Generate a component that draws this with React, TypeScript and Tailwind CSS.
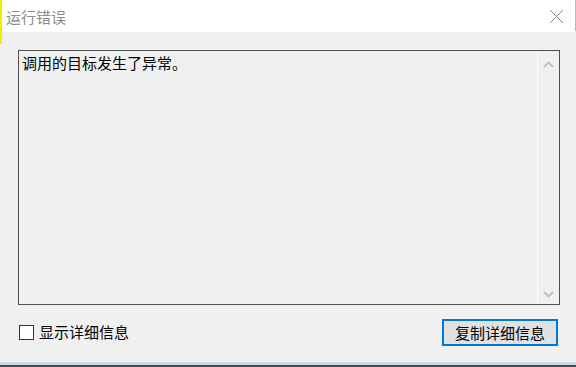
const font = { fontFamily: '"Microsoft YaHei", "Noto Sans CJK SC", "Noto Sans", sans-serif' }

function Chevron({ up }: { up?: boolean }) {
  return (
    <svg width="11" height="7" viewBox="0 0 11 7" className="text-[#bdbdbd]">
      <path
        d={up ? 'M1 6 L5.5 1.5 L10 6' : 'M1 1 L5.5 5.5 L10 1'}
        fill="none"
        stroke="currentColor"
        strokeWidth="1.8"
      />
    </svg>
  )
}

export default function App() {
  return (
    <div
      className="relative flex h-[367px] w-[576px] flex-col overflow-hidden bg-[#f0f0f0]"
      style={font}
    >
      {/* title bar */}
      <div className="flex h-[32px] items-center justify-between bg-white pl-[6px] pr-[12px]">
        <span className="text-[15px] leading-none text-[#8c8c8c]">运行错误</span>
        <svg width="15" height="15" viewBox="0 0 15 15" className="text-[#8a8a8a]">
          <path d="M1 1 L14 14 M14 1 L1 14" stroke="currentColor" strokeWidth="1" fill="none" />
        </svg>
      </div>

      <div className="flex flex-1 flex-col pl-[18px] pr-[16px] pt-[18px]">
        {/* message box */}
        <div className="flex h-[255px] border border-[#4f4f4f] bg-[#f0f0f0]">
          <div className="flex-1 pl-[3px] pt-[3px] text-[15px] leading-[18px] text-black">
            调用的目标发生了异常。
          </div>
          <div className="flex w-[22px] flex-col items-center justify-between border-l border-white pb-[6px] pt-[10px]">
            <Chevron up />
            <Chevron />
          </div>
        </div>

        {/* footer */}
        <div className="mt-[14px] flex items-center justify-between pr-[2px]">
          <label className="flex items-center gap-[5px] pl-[1px] text-[15px] text-black">
            <span className="h-[15px] w-[15px] border border-[#333333] bg-white" />
            显示详细信息
          </label>
          <button className="h-[27px] w-[116px] border-2 border-[#0078d7] bg-[#e1e1e1] text-[15px] leading-none text-black">
            复制详细信息
          </button>
        </div>
      </div>

      {/* bottom edge */}
      <div className="h-[3px] bg-[#c9dcef]" />
      <div className="h-[2px] bg-[#4a4a4a]" />

      {/* window edges */}
      <div className="absolute left-0 top-0 h-[44px] w-[2px] bg-[#f2ec00]" />
      <div className="absolute right-0 top-0 h-[31px] w-[1px] bg-[#c9c45a]" />
    </div>
  )
}
